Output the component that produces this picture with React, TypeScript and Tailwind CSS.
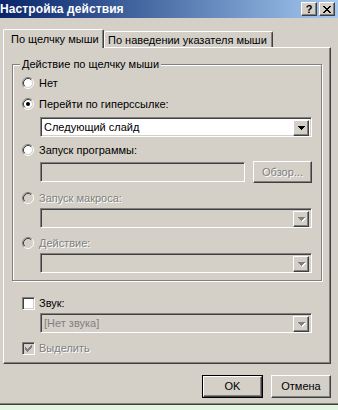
import React from "react";

const FONT = { fontFamily: '"Liberation Sans", Arial, sans-serif' } as const;

const raised =
  "border border-t-white border-l-white border-r-[#404040] border-b-[#404040] shadow-[inset_-1px_-1px_#808080]";
const sunken =
  "border border-t-[#808080] border-l-[#808080] border-r-white border-b-white shadow-[inset_1px_1px_#404040,inset_-1px_-1px_#d4d0c8]";
const disabledText = "text-[#808080] [text-shadow:1px_1px_0_#ffffff]";

function Radio({ checked = false, disabled = false }: { checked?: boolean; disabled?: boolean }) {
  return (
    <svg width="12" height="12" viewBox="0 0 12 12" className="shrink-0">
      <circle cx="6" cy="6" r="4.5" fill={disabled ? "#d4d0c8" : "#ffffff"} />
      <path d="M2.11 9.89 A5.5 5.5 0 0 1 9.89 2.11" fill="none" stroke="#808080" strokeWidth="1" />
      <path d="M9.89 2.11 A5.5 5.5 0 0 1 2.11 9.89" fill="none" stroke="#ffffff" strokeWidth="1" />
      <path d="M2.82 9.18 A4.5 4.5 0 0 1 9.18 2.82" fill="none" stroke="#404040" strokeWidth="1" />
      <path d="M9.18 2.82 A4.5 4.5 0 0 1 2.82 9.18" fill="none" stroke="#d4d0c8" strokeWidth="1" />
      {checked && <circle cx="6" cy="6" r="2" fill="#000000" />}
    </svg>
  );
}

function CheckMark({ color }: { color: string }) {
  const cols: [number, number][] = [
    [0, 2],
    [1, 3],
    [2, 4],
    [3, 3],
    [4, 2],
    [5, 1],
    [6, 0],
  ];
  return (
    <svg width="7" height="7" viewBox="0 0 7 7" shapeRendering="crispEdges">
      {cols.map(([x, y]) => (
        <rect key={x} x={x} y={y} width="1" height="3" fill={color} />
      ))}
    </svg>
  );
}

function Checkbox({ checked = false, disabled = false }: { checked?: boolean; disabled?: boolean }) {
  return (
    <div
      className={`w-[13px] h-[13px] shrink-0 flex items-center justify-center ${sunken} ${
        disabled ? "bg-[#d4d0c8]" : "bg-white"
      }`}
    >
      {checked && <CheckMark color={disabled ? "#808080" : "#000000"} />}
    </div>
  );
}

function Arrow({ disabled = false }: { disabled?: boolean }) {
  const rects = [
    [0, 0, 7],
    [1, 1, 5],
    [2, 2, 3],
    [3, 3, 1],
  ];
  return (
    <svg width="8" height="5" viewBox="0 0 8 5" shapeRendering="crispEdges">
      {disabled &&
        rects.map(([x, y, w]) => (
          <rect key={"s" + y} x={x + 1} y={y + 1} width={w} height="1" fill="#ffffff" />
        ))}
      {rects.map(([x, y, w]) => (
        <rect key={y} x={x} y={y} width={w} height="1" fill={disabled ? "#808080" : "#000000"} />
      ))}
    </svg>
  );
}

function Combo({ text, disabled = false }: { text?: string; disabled?: boolean }) {
  return (
    <div
      className={`h-[20px] w-[272px] flex items-stretch p-[2px] ${sunken} ${
        disabled ? "bg-[#d4d0c8]" : "bg-white"
      }`}
    >
      <div
        className={`flex-1 flex items-center pl-[1px] text-[11px] leading-none ${
          disabled ? "text-[#808080]" : "text-black"
        }`}
      >
        {text}
      </div>
      <div className={`w-[16px] h-[16px] bg-[#d4d0c8] flex items-center justify-center pt-[1px] pl-[1px] ${raised}`}>
        <Arrow disabled={disabled} />
      </div>
    </div>
  );
}

function RadioRow({
  label,
  checked = false,
  disabled = false,
  className = "",
}: {
  label: string;
  checked?: boolean;
  disabled?: boolean;
  className?: string;
}) {
  return (
    <div className={`h-[18px] flex items-center pl-[9px] ${className}`}>
      <Radio checked={checked} disabled={disabled} />
      <span className={`ml-[5px] text-[11px] leading-none ${disabled ? disabledText : "text-black"}`}>{label}</span>
    </div>
  );
}

function Button({ label, isDefault = false, disabled = false }: { label: string; isDefault?: boolean; disabled?: boolean }) {
  const inner = (
    <div
      className={`w-full h-full flex items-center justify-center bg-[#d4d0c8] text-[11px] leading-none ${raised} ${
        disabled ? disabledText : "text-black"
      }`}
    >
      {label}
    </div>
  );
  return inner;
}

export default function App() {
  return (
    <div className="w-[338px] h-[410px] bg-[#d4d0c8] flex flex-col overflow-hidden select-none" style={FONT}>
      {/* Title bar */}
      <div className="h-[18px] flex items-center bg-gradient-to-r from-[#0a246a] to-[#a6caf0]">
        <span className="text-white font-bold text-[12px] leading-none pl-[0px] tracking-[0.1px]">Настройка действия</span>
        <div className="ml-auto flex gap-[2px] pr-[3px]">
          <div className={`w-[16px] h-[14px] bg-[#d4d0c8] flex items-center justify-center ${raised}`}>
            <span className="text-black font-bold text-[11px] leading-none">?</span>
          </div>
          <div className={`w-[16px] h-[14px] bg-[#d4d0c8] flex items-center justify-center ${raised}`}>
            <svg width="8" height="7" viewBox="0 0 8 7" shapeRendering="crispEdges">
              <path d="M0 0h2v1h-2zM6 0h2v1h-2zM1 1h2v1h-2zM5 1h2v1h-2zM2 2h4v1h-4zM3 3h2v1h-2zM2 4h4v1h-4zM1 5h2v1h-2zM5 5h2v1h-2zM0 6h2v1h-2zM6 6h2v1h-2z" fill="#000" />
            </svg>
          </div>
        </div>
      </div>

      {/* Tabs */}
      <div className="mt-[11px] flex items-end pl-[3px]">
        <div className="relative z-10 w-[101px] h-[19px] mb-[-1px] bg-[#d4d0c8] border-t border-l border-t-white border-l-white border-r border-r-[#404040] shadow-[inset_-1px_0_#808080] rounded-tl-[2px] rounded-tr-[2px] flex items-start pt-[4px] pl-[7px]">
          <span className="text-[11px] leading-none text-black">По щелчку мыши</span>
        </div>
        <div className="w-[169px] h-[16px] bg-[#d4d0c8] border-t border-l border-t-white border-l-white border-r border-r-[#404040] shadow-[inset_-1px_0_#808080] rounded-tl-[2px] rounded-tr-[2px] flex items-start pt-[3px] pl-[3px]">
          <span className="text-[11px] leading-none text-black">По наведении указателя мыши</span>
        </div>
      </div>

      {/* Panel */}
      <div className={`ml-[3px] w-[328px] h-[317px] ${raised} pt-[16px] px-[8px]`}>
        {/* Group box */}
        <div className="relative h-[217px] border border-[#808080] shadow-[1px_1px_0_#ffffff,inset_1px_1px_0_#ffffff]">
          <span className="absolute left-[7px] top-[-7px] px-[2px] bg-[#d4d0c8] text-[11px] leading-[13px] text-black">
            Действие по щелчку мыши
          </span>
          <div className="pt-[9px]">
            <RadioRow label="Нет" />
            <RadioRow label="Перейти по гиперссылке:" checked className="mt-[3px]" />
            <div className="mt-[4px] pl-[27px]">
              <Combo text="Следующий слайд" />
            </div>
            <RadioRow label="Запуск программы:" className="mt-[4px]" />
            <div className="mt-[2px] pl-[27px] flex items-center">
              <div className={`w-[205px] h-[20px] bg-[#d4d0c8] ${sunken}`} />
              <div className="ml-[8px] w-[59px] h-[22px]">
                <Button label="Обзор..." disabled />
              </div>
            </div>
            <RadioRow label="Запуск макроса:" disabled className="mt-[6px]" />
            <div className="mt-[1px] pl-[27px]">
              <Combo disabled />
            </div>
            <RadioRow label="Действие:" disabled className="mt-[6px]" />
            <div className="mt-[1px] pl-[27px]">
              <Combo disabled />
            </div>
          </div>
        </div>

        {/* Sound */}
        <div className="mt-[13px] h-[18px] flex items-center pl-[10px]">
          <Checkbox />
          <span className="ml-[4px] text-[11px] leading-none text-black">Звук:</span>
        </div>
        <div className="mt-[1px] pl-[28px]">
          <Combo text="[Нет звука]" disabled />
        </div>
        <div className="mt-[6px] h-[18px] flex items-center pl-[10px]">
          <Checkbox checked disabled />
          <span className={`ml-[4px] text-[11px] leading-none ${disabledText}`}>Выделить</span>
        </div>
      </div>

      {/* Buttons */}
      <div className="mt-[11px] flex justify-end gap-[8px] pr-[7px]">
        <div className="w-[61px] h-[23px] border border-black">
          <Button label="OK" isDefault />
        </div>
        <div className="w-[60px] h-[23px]">
          <Button label="Отмена" />
        </div>
      </div>

      {/* Bottom frame */}
      <div className="mt-[5px] h-[1px] bg-[#808080]" />
      <div className="h-[1px] bg-[#404040]" />
      <div className="flex-1 bg-[#e4f6e2]" />
    </div>
  );
}
